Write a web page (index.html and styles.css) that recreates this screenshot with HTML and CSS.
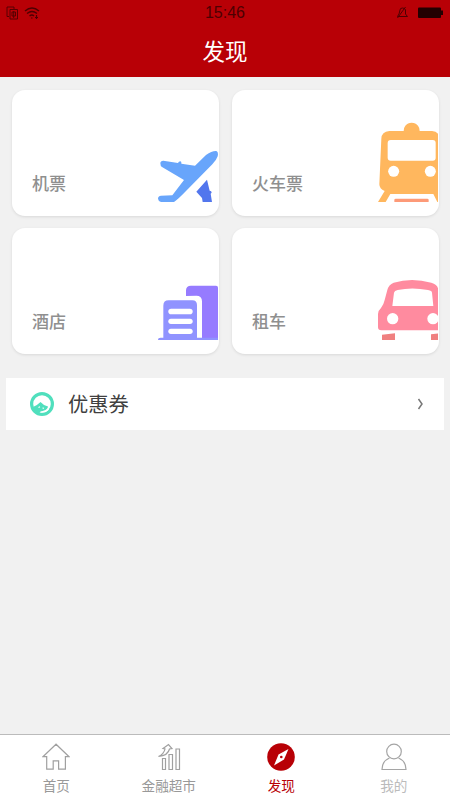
FILE: index.html
```html
<!DOCTYPE html>
<html lang="zh-CN">
<head>
<meta charset="utf-8">
<title>发现</title>
<link rel="stylesheet" href="styles.css">
</head>
<body>
<header class="header">
  <div class="status">
    <div class="status-left">
      <svg width="13" height="14" viewBox="0 0 13 14" fill="none" stroke="currentColor" stroke-width=".9"><path d="M3 10.500H1V1h7v2M4 3.500h7.500v9.500H4zM6 6h3.500v4H6zM7.700 5v7"/></svg>
      <svg width="16" height="14" viewBox="0 0 16 14" fill="none" stroke="currentColor" stroke-width="1.400"><path d="M1 5Q8-1 15 5M3 7.500q5-4 10 0M5.500 10q2.500-2 4.500 0"/><path d="M7 12h1.500M11 11.500h3M12.500 9v4" stroke-width="1.200"/></svg>
    </div>
    <div class="time">15:46</div>
    <div class="status-right">
      <svg width="13" height="13" viewBox="0 0 13 13" fill="none" stroke="currentColor"><path d="M1.500 10.500h10L9.500 8V4Q9 2 6.500 2T4 4L3 8zM1.500 12L9.500 1"/></svg>
      <svg class="battery" width="26" height="12" viewBox="0 0 26 12" fill="currentColor"><rect x="0" y="0.500" width="23" height="10.500" rx="1"/><path d="M23 3.500h2v4.500h-2z"/></svg>
    </div>
  </div>
  <h1 class="title">发现</h1>
</header>
<main class="main">
  <div class="grid">
    <section class="card"><span class="label">机票</span>
      <svg width="60" height="60" viewBox="54 6 180 180"><path fill="#68a5fb" d="M61 70Q61 62 70 62L114 69Q116 64 121 64Q125 65 124 71L165 77L198 45Q216 32 229 33Q236 36 233 49Q229 61 217 73L138 153Q114 178 102 186H63Q55 184 54 176Q54 168 63 167L97 166L132 120L66 81Q61 78 61 70z"/><path fill="#5276ed" d="M201 119L209 152Q215 152 215 158L212 161L216 186H188L186 174L169 155Q185 137 201 119z"/></svg>
    </section>
    <section class="card"><span class="label">火车票</span>
      <svg width="60" height="80" viewBox="54 36 180 240"><path fill="#ffb75e" d="M131 63q0-10 5-16 7-9 19-9t19 9q5 6 5 16h37q12 1 18 8v205h-2l-12-24H91l-14 24H54l20-33q-16-6-16-20L64 86q1-21 24-23z"/><rect x="83" y="90" width="144" height="62" rx="9" fill="#fff"/><circle cx="101" cy="184" r="16.500" fill="#fff"/><circle cx="211" cy="184" r="16.500" fill="#fff"/><rect x="103" y="266" width="103" height="12" rx="4" fill="#fd9a78"/></svg>
    </section>
    <section class="card"><span class="label">酒店</span>
      <svg width="60" height="60" viewBox="54 30 180 180"><path fill="#967bff" d="M138 78V61q0-14 15-14h75q6 0 6 6v157h-48V94q0-17-17-17z"/><path fill="#9093ff" d="M54 210q0-7 8-7h8v-96q0-16 16-16h71q14 0 14 14v98h63v7z"/><g fill="#fff"><rect x="85" y="116" width="73" height="17" rx="8.500"/><rect x="85" y="146" width="73" height="16" rx="8"/><rect x="85" y="176" width="73" height="16" rx="8"/></g></svg>
    </section>
    <section class="card"><span class="label">租车</span>
      <svg width="60" height="60" viewBox="54 45 180 180"><path fill="#ff8b9f" d="M54 187v-40q0-10 9-18 8-10 11-24l8-30q4-16 19-22 54-16 113 0 17 5 20 17v126H64q-10 0-10-9z"/><path fill="#fff" d="M97 123l5-40q1-6 11-8 43-9 91 0 12 2 12 8l4 40z"/><circle cx="98" cy="161" r="17" fill="#fff"/><circle cx="219" cy="161" r="17" fill="#fff"/><path fill="#f08080" d="M66 209l39-4v20H66zM213 208l22-3v20h-22z"/></svg>
    </section>
  </div>
  <section class="coupon">
    <svg width="24" height="24" viewBox="0 0 24 24"><circle cx="12" cy="12" r="10.400" fill="#fff" stroke="#50dfbd" stroke-width="3.200"/><path fill="#50dfbd" d="M3 15q4-1.500 7.500-5 3 3.500 7.500 4.500-.5 3-4 4l-4 1.500-1 2q-4-2-6-7z"/><path d="M8.500 15.500l1.500-.7M12.500 16l1.500.3M10.500 20q5.500.5 8-3" fill="none" stroke="#fff" stroke-width="1.100"/></svg>
    <span class="coupon-text">优惠券</span>
    <svg class="chevron" width="7" height="12" viewBox="0 0 7 12" fill="none" stroke="#777" stroke-width="1.500"><path d="M1.500 1l3.500 5-3.500 5"/></svg>
  </section>
</main>
<nav class="tabs">
  <div class="tab"><svg width="28" height="28" viewBox="0 0 28 28" fill="none" stroke="#a0a0a0" stroke-width="1.200"><path d="M14 1.200L.9 13.700h3.800v12.400h6.500v-8.300h5.400v8.300h6.800V13.700h3.700z"/></svg><span>首页</span></div>
  <div class="tab"><svg width="28" height="28" viewBox="0 0 28 28" fill="none" stroke="#a0a0a0" stroke-width="1.200"><path d="M7.500 15.500h3v11h-3zM14 11.500h3.500v15H14zM21 6h3.500v20.500H21zM3.500 13.500Q9 11 10 6L8 5.500l5.500-4L17 5.500l-2.500.5Q13 12.500 3.500 13.500z"/></svg><span>金融超市</span></div>
  <div class="tab active"><svg width="28" height="28" viewBox="0 0 28 28"><circle cx="14" cy="14" r="13.800" fill="#b80006"/><path fill="#fff" d="M21.500 6L17 16.500 7 22.500l4.500-11z"/><circle cx="14.300" cy="14" r="1.300" fill="#b80006"/></svg><span>发现</span></div>
  <div class="tab pale"><svg width="28" height="28" viewBox="0 0 28 28" fill="none" stroke="#a5a5a5" stroke-width="1.200"><circle cx="14" cy="8.500" r="7.300"/><path d="M9.500 15Q2 18 2 26.500h24Q26 18 18.500 15"/></svg><span>我的</span></div>
</nav>
</body>
</html>
```
FILE: styles.css
```css
* { box-sizing: border-box; }
body {
  margin: 0;
  height: 800px;
  display: flex;
  flex-direction: column;
  background: #f1f1f1;
  font-family: "Noto Sans CJK SC", sans-serif;
  overflow: hidden;
}
svg { display: block; flex: none; }
.header { height: 77px; background: #b80006; }
.status {
  height: 24px;
  padding: 0 6px;
  display: grid;
  grid-template-columns: 1fr auto 1fr;
  align-items: center;
  color: #4d0002;
}
.status-left, .status-right { display: flex; align-items: center; gap: 5px; }
.status-right { justify-content: flex-end; gap: 9px; }
.battery { color: #240001; }
.time { font: 16px/24px "Liberation Sans", sans-serif; padding-top: 1px; }
.title {
  margin: 0;
  font-size: 22.500px;
  font-weight: 400;
  line-height: 52px;
  text-align: center;
  color: #fff;
}
.main { flex: 1; }
.grid {
  display: grid;
  grid-template-columns: 207px 207px;
  grid-auto-rows: 126px;
  gap: 12px 13px;
  padding: 13px 0 0 12px;
}
.card {
  display: flex;
  justify-content: space-between;
  align-items: flex-end;
  padding: 0 1px 14px 20px;
  border-radius: 13px;
  background: #fff;
  box-shadow: 0 1px 3px rgba(0, 0, 0, .1);
}
.label {
  font-size: 17px;
  font-weight: 500;
  line-height: 24px;
  margin-bottom: 7px;
  color: #8f8f8f;
}
.coupon {
  display: flex;
  align-items: center;
  height: 52px;
  margin: 24px 6px 0;
  padding: 0 20px 0 24px;
  background: #fff;
}
.coupon-text { margin: -2px 0 0 14px; font-size: 20.300px; color: #404040; }
.chevron { margin-left: auto; }
.tabs {
  display: flex;
  height: 66px;
  border-top: 1px solid #bbb;
  background: #fff;
}
.tab {
  flex: 1;
  display: flex;
  flex-direction: column;
  align-items: center;
  padding-top: 8px;
  font-size: 13.600px;
  line-height: 20px;
  color: #999;
}
.tab span { margin-top: 4px; }
.active { color: #b80006; }
.pale { color: #bbb; }
```
